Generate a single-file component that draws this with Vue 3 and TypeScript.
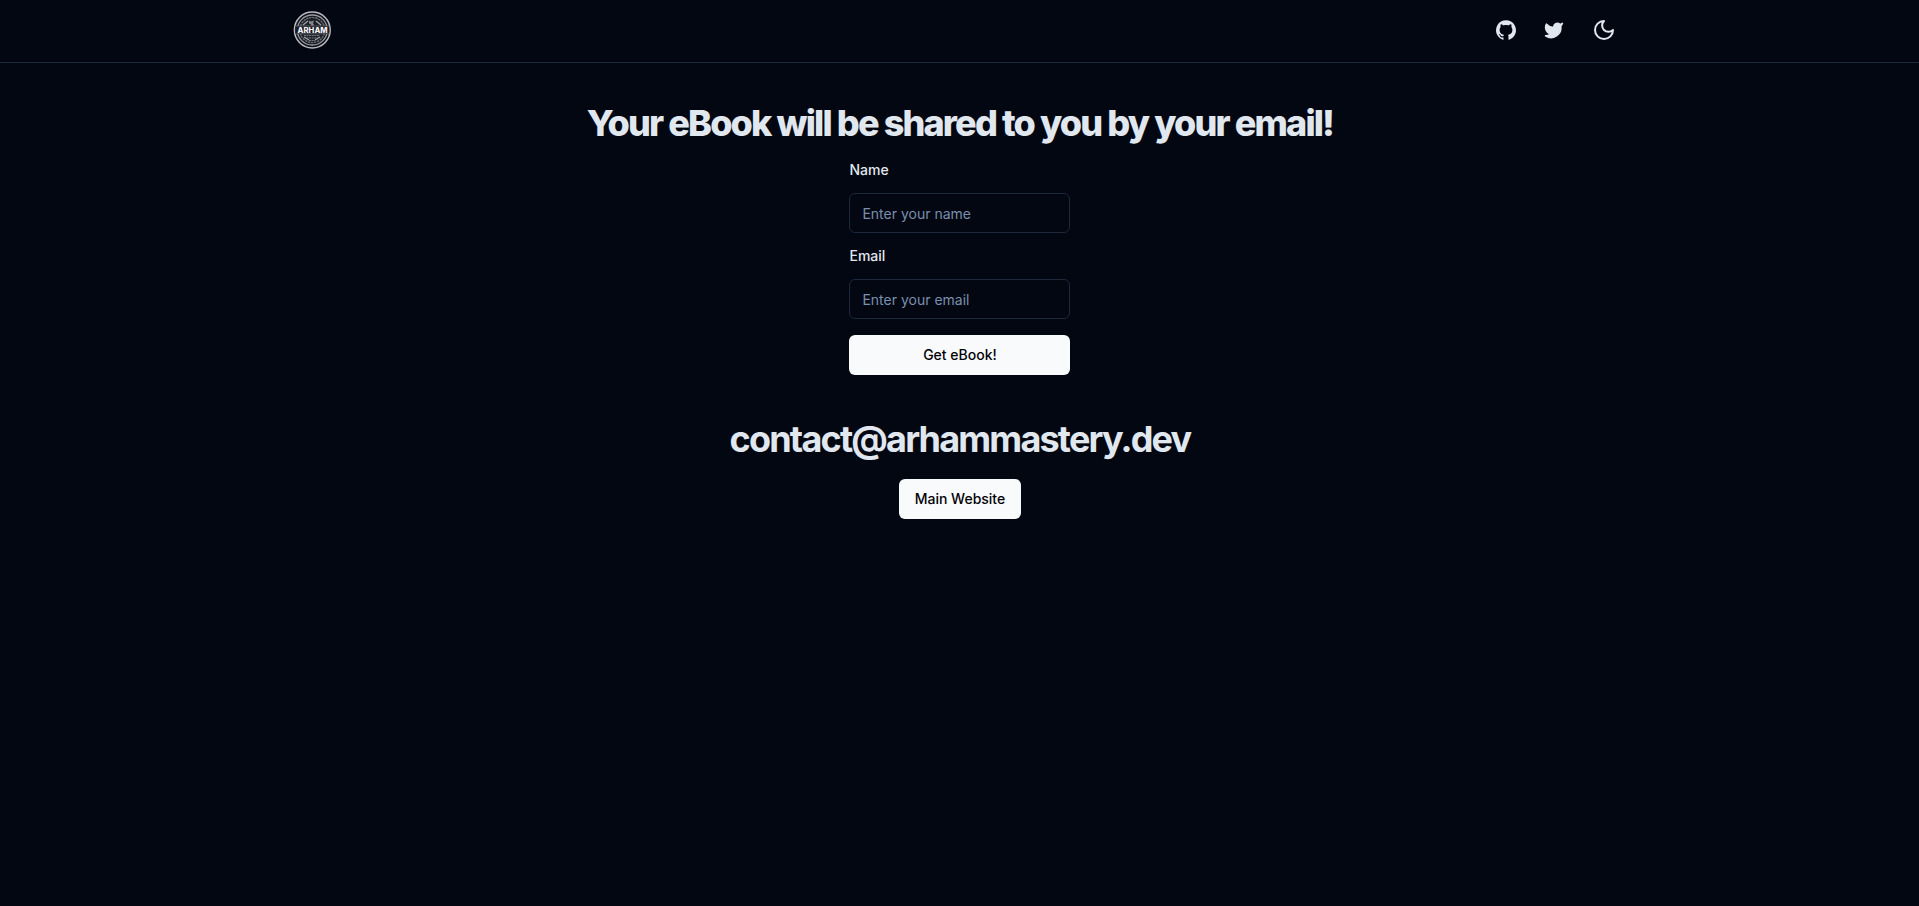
<script setup lang="ts">
import { ref } from 'vue'

interface Field {
  id: string
  label: string
  type: string
  placeholder: string
}

const fields: Field[] = [
  { id: 'name', label: 'Name', type: 'text', placeholder: 'Enter your name' },
  { id: 'email', label: 'Email', type: 'email', placeholder: 'Enter your email' },
]
const values = ref<Record<string, string>>({ name: '', email: '' })
</script>

<template>
  <div class="page">
    <header class="header">
      <div class="container">
        <a class="logo" href="#" aria-label="Home">
          <svg width="40" height="40" viewBox="0 0 40 40">
            <circle cx="20.3" cy="20" r="17.9" fill="#11141c" stroke="#b9bbc0" stroke-width="1.5" />
            <circle cx="20.3" cy="20" r="15" fill="none" stroke="#9b9da3" stroke-width="1.3" />
            <circle cx="20.3" cy="20" r="12.6" fill="#1e2129" stroke="#6c6e76" stroke-width="1.4" stroke-dasharray="2.4 .7" />
            <path d="M11 15l5-4M24 11l5 4M12 27l5 3M23 30l5-3" stroke="#a8aab0" stroke-width="1.1" />
            <path d="M17 10.5l2 1 3-1-1 3 1 1-2 2-1-2-2-1z" fill="#85878e" />
            <path d="M12 25.6h16M14.5 28h11M17 30.5h6" stroke="#777a82" stroke-width="1" stroke-dasharray="2 .6" />
            <rect x="3.4" y="16" width="33.8" height="7.8" fill="#171a22" />
            <path d="M3.4 16h34M3.4 23.8h34" stroke="#74767d" stroke-width=".7" />
            <text x="20.6" y="22.6" text-anchor="middle" textLength="30" lengthAdjust="spacingAndGlyphs">ARHAM</text>
          </svg>
        </a>
        <nav class="actions">
          <a class="action" href="#" aria-label="GitHub">
            <svg width="20" height="20" viewBox="0 0 438.549 438.549">
              <path fill="currentColor" d="M409.132 114.573c-19.608-33.596-46.205-60.194-79.798-79.8-33.598-19.607-70.277-29.408-110.063-29.408-39.781 0-76.472 9.804-110.063 29.408-33.596 19.605-60.192 46.204-79.8 79.8C9.803 148.168 0 184.854 0 224.63c0 47.78 13.94 90.745 41.827 128.906 27.884 38.164 63.906 64.572 108.063 79.227 5.14.954 8.945.283 11.419-1.996 2.475-2.282 3.711-5.14 3.711-8.562 0-.571-.049-5.708-.144-15.417a2549.81 2549.81 0 01-.144-25.406l-6.567 1.136c-4.187.767-9.469 1.092-15.846 1-6.374-.089-12.991-.757-19.842-1.999-6.854-1.231-13.229-4.086-19.13-8.559-5.898-4.473-10.085-10.328-12.56-17.556l-2.855-6.57c-1.903-4.374-4.899-9.233-8.992-14.559-4.093-5.331-8.232-8.945-12.419-10.848l-1.999-1.431c-1.332-.951-2.568-2.098-3.711-3.429-1.142-1.331-1.997-2.663-2.568-3.997-.572-1.335-.098-2.43 1.427-3.289 1.525-.859 4.281-1.276 8.28-1.276l5.708.853c3.807.763 8.516 3.042 14.133 6.851 5.614 3.806 10.229 8.754 13.846 14.842 4.38 7.806 9.657 13.754 15.846 17.847 6.184 4.093 12.419 6.136 18.699 6.136 6.28 0 11.704-.476 16.274-1.423 4.565-.952 8.848-2.383 12.847-4.285 1.713-12.758 6.377-22.559 13.988-29.41-10.848-1.14-20.601-2.857-29.264-5.14-8.658-2.286-17.605-5.996-26.835-11.14-9.235-5.137-16.896-11.516-22.985-19.126-6.09-7.614-11.088-17.61-14.987-29.979-3.901-12.374-5.852-26.648-5.852-42.826 0-23.035 7.52-42.637 22.557-58.817-7.044-17.318-6.379-36.732 1.997-58.24 5.52-1.715 13.706-.428 24.554 3.853 10.85 4.283 18.794 7.952 23.84 10.994 5.046 3.041 9.089 5.618 12.135 7.708 17.705-4.947 35.976-7.421 54.818-7.421s37.117 2.474 54.823 7.421l10.849-6.849c7.419-4.57 16.18-8.758 26.262-12.565 10.088-3.805 17.802-4.853 23.134-3.138 8.562 21.509 9.325 40.922 2.279 58.24 15.036 16.18 22.559 35.787 22.559 58.817 0 16.178-1.958 30.497-5.853 42.966-3.9 12.471-8.941 22.457-15.125 29.979-6.191 7.521-13.901 13.85-23.131 18.986-9.232 5.14-18.182 8.85-26.84 11.136-8.662 2.286-18.415 4.004-29.263 5.146 9.894 8.562 14.842 22.077 14.842 40.539v60.237c0 3.422 1.19 6.279 3.572 8.562 2.379 2.279 6.136 2.95 11.276 1.995 44.163-14.653 80.185-41.062 108.068-79.226 27.88-38.161 41.825-81.126 41.825-128.906-.01-39.771-9.818-76.454-29.414-110.049z" />
            </svg>
          </a>
          <a class="action" href="#" aria-label="Twitter">
            <svg width="20" height="20" viewBox="0 0 24 24" stroke="currentColor" stroke-width="2" stroke-linecap="round" stroke-linejoin="round">
              <path fill="currentColor" d="M22 4s-.7 2.1-2 3.4c1.6 10-9.4 17.3-18 11.6 2.2.1 4.4-.6 6-2C3 15.5.5 9.6 3 5c2.2 2.6 5.6 4.1 9 4-.9-4.2 4-6.6 7-3.8 1.1 0 3-1.2 3-1.2z" />
            </svg>
          </a>
          <button class="action theme" type="button" aria-label="Toggle theme">
            <svg width="24" height="24" viewBox="0 0 24 24" fill="none" stroke="currentColor" stroke-width="2" stroke-linecap="round" stroke-linejoin="round">
              <path d="M12 3a6 6 0 0 0 9 9 9 9 0 1 1-9-9Z" />
            </svg>
          </button>
        </nav>
      </div>
    </header>

    <main class="main">
      <h1 class="title">Your eBook will be shared to you by your email!</h1>
      <form class="form" @submit.prevent>
        <div v-for="field in fields" :key="field.id" class="field">
          <label :for="field.id">{{ field.label }}</label>
          <input :id="field.id" v-model="values[field.id]" :type="field.type" :placeholder="field.placeholder" />
        </div>
        <button class="button" type="submit">Get eBook!</button>
      </form>
      <h2 class="title contact">contact@arhammastery.dev</h2>
      <a class="button site" href="#">Main Website</a>
    </main>
  </div>
</template>

<style>
body {
  background: #030711;
}
</style>

<style scoped>
.page,
.page * {
  box-sizing: border-box;
}
.page {
  min-height: 100vh;
  background: #030711;
  color: #e1e7ef;
  font-family: Inter, 'Liberation Sans', sans-serif;
  font-size: 14px;
}
.header {
  height: 63px;
  border-bottom: 1px solid #1d283a;
}
.container {
  display: flex;
  justify-content: space-between;
  align-items: center;
  width: 1400px;
  height: 60px;
  margin: 0 auto;
  padding: 0 32px;
}
.logo svg {
  display: block;
}
.logo text {
  fill: #f4f4f5;
  font: 800 7.4px Inter, sans-serif;
}
.actions {
  display: flex;
  align-items: center;
  gap: 4px;
}
.action {
  display: flex;
  align-items: center;
  justify-content: center;
  width: 44px;
  height: 40px;
  padding: 0;
  border: 0;
  background: none;
  color: #e1e7ef;
}
.theme {
  width: 48px;
}
.main {
  display: flex;
  flex-direction: column;
  align-items: center;
  padding: 38px 0 0 0.9px;
}
.title {
  margin: 0;
  font-size: 36px;
  font-weight: 800;
  line-height: 45px;
  letter-spacing: -1.85px;
}
.form {
  display: flex;
  flex-direction: column;
  gap: 16px;
  width: 221px;
  margin-top: 17px;
}
.field {
  display: flex;
  flex-direction: column;
  gap: 16px;
}
label {
  font-weight: 550;
  line-height: 14px;
}
input {
  width: 100%;
  height: 40px;
  padding: 8px 12px;
  border: 1px solid #1d283a;
  border-radius: 6px;
  outline: none;
  background: transparent;
  color: inherit;
  font: 400 14px/20px Inter, sans-serif;
}
input::placeholder {
  color: #7a8fae;
  opacity: 1;
}
.button {
  display: flex;
  align-items: center;
  justify-content: center;
  height: 40px;
  padding: 0 16px;
  border: 0;
  border-radius: 6px;
  background: #f8fafc;
  color: #020205;
  font: 500 14px/20px Inter, sans-serif;
  text-decoration: none;
}
.contact {
  margin-top: 42px;
  font-weight: 700;
  letter-spacing: -1.8px;
}
.site {
  width: 122px;
  margin-top: 17px;
  padding: 0;
}
</style>
